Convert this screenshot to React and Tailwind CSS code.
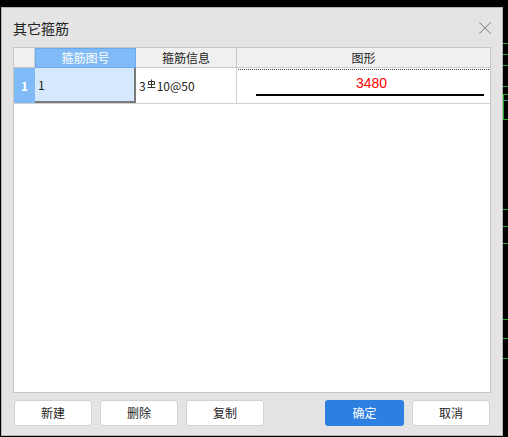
import { X } from 'lucide-react';

const greenMarks = [43, 54, 65, 86, 209, 226, 243, 319, 338, 358];

const buttons = [
  { label: '新建', primary: false },
  { label: '删除', primary: false },
  { label: '复制', primary: false },
];

function RebarMark() {
  return (
    <svg width="9" height="10" viewBox="0 0 9 10" className="inline-block -mt-[3px] mx-[1px]">
      <path d="M1.5 2.5 H7.5 V5.5 H1.5 Z M4.5 0.5 V8 M0.5 8.5 H8.5" fill="none" stroke="#333" strokeWidth="1" />
    </svg>
  );
}

export default function App() {
  return (
    <div className="relative w-[508px] h-[437px] bg-black overflow-hidden flex flex-col" style={{ fontFamily: '"Noto Sans CJK SC", "Noto Sans", sans-serif' }}>
      <div className="h-[7px] shrink-0" />
      <div className="ml-[1px] w-[502px] h-[429px] bg-[#e4e4e4] border border-[#b4b4b4] flex flex-col">
        {/* title */}
        <div className="h-[39px] flex items-center justify-between pl-[11px] pr-[6px]">
          <span className="text-[14px] text-[#222] leading-none">其它箍筋</span>
          <X className="w-[22px] h-[22px] text-[#8a8a8a]" strokeWidth={1.1} />
        </div>

        {/* grid */}
        <div className="ml-[11px] w-[478px] h-[346px] bg-white border border-[#c6c6c6] flex flex-col text-[12px] text-[#222]">
          <div className="grid grid-cols-[21px_101px_101px_1fr] h-[20px] bg-[#f0f0f0] border-b border-[#c6c6c6]">
            <div className="border-r border-[#d0d0d0]" />
            <div className="bg-[#80bbf7] text-white flex items-center justify-center border border-[#6aaaf0]">箍筋图号</div>
            <div className="flex items-center justify-center border-r border-[#c6c6c6]">箍筋信息</div>
            <div className="flex items-center justify-center">图形</div>
          </div>
          <div className="grid grid-cols-[21px_101px_101px_1fr] h-[36px] border-b border-[#d0d0d0]">
            <div className="bg-[#80bbf7] text-white font-bold flex items-center justify-center">1</div>
            <div className="bg-[#d6e9fc] border-r-2 border-b-2 border-[#7a7a7a] flex items-center pl-[3px]">1</div>
            <div className="flex items-center pl-[3px] border-r border-[#d0d0d0]">
              3<RebarMark />10@50
            </div>
            <div className="flex flex-col pt-[1px]">
              <div className="h-[1px] mx-[1px] border-t border-dotted border-[#333]" />
              <div className="font-['Liberation_Sans',sans-serif] text-[14px] text-[#ff0000] text-center leading-none mt-[6px] pl-[16px]">3480</div>
              <div className="h-[2px] bg-black ml-[19px] mr-[6px] mt-[4px]" />
            </div>
          </div>
        </div>

        {/* buttons */}
        <div className="flex ml-[12px] mt-[7px] gap-[8px] text-[12px]">
          {buttons.map(b => (
            <button key={b.label} className="w-[78px] h-[26px] bg-white border border-[#d2d2d2] rounded-[3px] text-[#222]">{b.label}</button>
          ))}
          <button className="ml-[53px] w-[79px] h-[26px] bg-[#2e80e0] rounded-[3px] text-white">确定</button>
          <button className="w-[78px] h-[26px] bg-white border border-[#d2d2d2] rounded-[3px] text-[#222]">取消</button>
        </div>
      </div>

      {/* background cad marks on the right */}
      {greenMarks.map(y => (
        <div key={y} className="absolute left-[503px] w-[5px] h-[1px] bg-[#1fa51f]" style={{ top: y }} />
      ))}
      <div className="absolute left-[503px] top-[94px] w-[5px] h-[26px] border-l border-t border-b border-[#1fa51f]" />
      <div className="absolute left-[503px] top-[100px] w-[5px] h-[1px] bg-[#2a9aa0]" />
    </div>
  );
}
